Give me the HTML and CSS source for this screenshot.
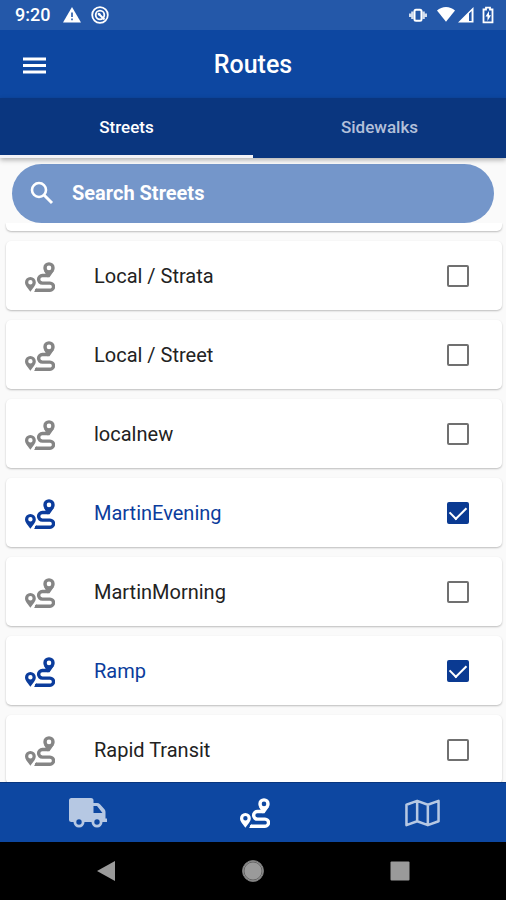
FILE: index.html
```html
<!DOCTYPE html>
<html lang="en">
<head>
<meta charset="utf-8">
<meta name="viewport" content="width=device-width, initial-scale=1">
<title>Routes</title>
<link rel="stylesheet" href="styles.css">
</head>
<body>
<svg class="defs" aria-hidden="true">
  <symbol id="route" viewBox="0 0 30 30">
    <g fill="none" stroke="currentColor" stroke-width="3.400" stroke-linecap="round" stroke-linejoin="round">
      <circle cx="24" cy="5.900" r="4"/>
      <path d="M23 13.500H17.400a3.800 3.800 0 0 0 0 7.600H25a3.550 3.550 0 0 1 0 7.100H11.500"/>
    </g>
    <path fill="currentColor" d="M9 29.900 12 25.900V29.900ZM18.800 8.500 24 10.500 29.200 8.500 24.500 15.200H22.500Z"/>
    <path fill="currentColor" fill-rule="evenodd" d="M5.400 14.900A5.400 5.400 0 0 0 0 20.300C0 23.800 3 26 5.400 29.800 7.800 26 10.800 23.800 10.800 20.300A5.400 5.400 0 0 0 5.400 14.900ZM5.400 18.100a2.200 2.200 0 1 1 0 4.400 2.200 2.200 0 0 1 0-4.400Z"/>
  </symbol>
</svg>
<div class="screen">
  <div class="status">
    <span class="clock">9:20</span>
    <svg class="glyph" viewBox="0 0 18 18"><path fill="#fff" d="M9 1 18 16.500H0Z"/><path stroke="#2458a9" stroke-width="1.600" d="M9 6.500v4.500M9 12.500v1.800"/></svg>
    <svg class="glyph" viewBox="0 0 18 18" fill="none" stroke="#fff"><circle cx="9" cy="9" r="7.800" stroke-width="1.800"/><circle cx="9" cy="9" r="4.300" stroke-width="1.800"/><path d="M7 7.200 13.500 13.500" stroke-width="2"/><circle cx="8.300" cy="8.300" r="1.300" fill="#fff" stroke="none"/></svg>
    <span class="spacer"></span>
    <svg class="glyph" viewBox="0 0 18 18"><rect x="5.500" y="3.800" width="7" height="11" rx="1.500" fill="none" stroke="#fff" stroke-width="2"/><path stroke="#fff" stroke-width="2.400" stroke-opacity=".8" d="M3.400 5.500v7.500M1.200 7.500v3.500M14.600 5.500v7.500M16.800 7.500v3.500"/></svg>
    <span class="signals">
      <svg class="glyph" viewBox="0 0 18 18"><path fill="#fff" d="M0 4.500C5-.3 13-.3 18 4.500L9 15.800Z"/></svg>
      <svg class="glyph" viewBox="0 0 18 18"><path fill="#fff" fill-rule="evenodd" d="M1 16.500 16.500 1V16.500ZM12 7.500V15h2.600V5.100Z"/></svg>
    </span>
    <svg class="battery" viewBox="0 0 12 18"><path fill="none" stroke="#fff" stroke-width="1.800" d="M1.500 3.500h2.500V1.600h4v1.900h2.500v12.800h-9Z"/><path fill="#fff" d="M7 5 3.500 10.500h2V15L9 9.200H7Z"/></svg>
  </div>
  <header class="appbar">
    <button class="menu" aria-label="Menu"><svg viewBox="0 0 24 18"><path stroke="#fff" stroke-width="3" d="M0 3h23M0 9.500h23M0 16h23"/></svg></button>
    <h1>Routes</h1>
  </header>
  <nav class="tabs">
    <button class="tab active">Streets</button>
    <button class="tab">Sidewalks</button>
  </nav>
  <main>
    <label class="search">
      <svg viewBox="0 0 24 24" fill="none" stroke="#fff"><circle cx="9" cy="9" r="7" stroke-width="2.600"/><path d="M14 14 22 22" stroke-width="3"/></svg>
      <input type="text" placeholder="Search Streets" aria-label="Search Streets">
    </label>
    <ul class="list">
      <li class="card edge"></li>
      <li class="card"><label><svg class="route"><use href="#route"/></svg><span>Local / Strata</span><input type="checkbox"></label></li>
      <li class="card"><label><svg class="route"><use href="#route"/></svg><span>Local / Street</span><input type="checkbox"></label></li>
      <li class="card"><label><svg class="route"><use href="#route"/></svg><span>localnew</span><input type="checkbox"></label></li>
      <li class="card on"><label><svg class="route"><use href="#route"/></svg><span>MartinEvening</span><input type="checkbox" checked></label></li>
      <li class="card"><label><svg class="route"><use href="#route"/></svg><span>MartinMorning</span><input type="checkbox"></label></li>
      <li class="card on"><label><svg class="route"><use href="#route"/></svg><span>Ramp</span><input type="checkbox" checked></label></li>
      <li class="card"><label><svg class="route"><use href="#route"/></svg><span>Rapid Transit</span><input type="checkbox"></label></li>
    </ul>
  </main>
  <nav class="bottom">
    <button aria-label="Trucks"><svg class="truck" viewBox="0 0 38 32"><path fill="currentColor" fill-rule="evenodd" d="M2.500 1H22a2.500 2.500 0 0 1 2.500 2.500V6H28a4 4 0 0 1 3 1.300l4.500 5a4 4 0 0 1 1 2.700v6.500H38V25H33.500a5.500 5.500 0 0 1-11 0H15.500a5.500 5.500 0 0 1-11 0H2.500A2.500 2.500 0 0 1 0 22.500v-19A2.500 2.500 0 0 1 2.500 1ZM24.500 9v7H33.500L28 9ZM10 22.300a2.700 2.700 0 1 0 0 5.400 2.700 2.700 0 0 0 0-5.400ZM28 22.300a2.700 2.700 0 1 0 0 5.400 2.700 2.700 0 0 0 0-5.400Z"/></svg></button>
    <button class="current" aria-label="Routes"><svg class="route"><use href="#route"/></svg></button>
    <button aria-label="Map"><svg class="map" viewBox="0 0 36 28"><path fill="none" stroke="currentColor" stroke-width="2.600" stroke-linejoin="round" d="M1.500 5.500 12.500 1.500 23.500 5.500 34.500 1.500V22.500L23.500 26.500 12.500 22.500 1.500 26.500ZM12.500 1.500v21M23.500 5.500v21"/></svg></button>
  </nav>
  <div class="system">
    <button aria-label="Back"><svg viewBox="0 0 24 24"><path fill="#9a9a9a" d="M3 12 21 2V22Z"/></svg></button>
    <button aria-label="Home"><svg viewBox="0 0 24 24"><circle cx="12" cy="12" r="10.500" fill="#9a9a9a" stroke="#777"/><circle cx="12" cy="12" r="9" fill="none" stroke="#555" stroke-width=".8"/></svg></button>
    <button aria-label="Recent apps"><svg viewBox="0 0 24 24"><rect x="2.500" y="2.500" width="19" height="19" rx="1" fill="#9a9a9a"/></svg></button>
  </div>
</div>
</body>
</html>
```
FILE: styles.css
```css
* { box-sizing: border-box; }
body { margin: 0; font-family: Roboto, "Liberation Sans", sans-serif; background: #fafafa; }
button { border: 0; padding: 0; background: none; font: inherit; color: inherit; }
svg { display: block; flex: none; }
.defs { position: absolute; width: 0; height: 0; }
.screen { display: flex; flex-direction: column; height: 100vh; overflow: hidden; }

.status { display: flex; align-items: center; gap: 10px; height: 30px; flex: none; padding: 0 12px 0 15px; background: #2458a9; color: #fff; }
.clock { font-size: 18px; font-weight: 500; line-height: 30px; margin-right: 3px; }
.spacer { flex: 1; }
.glyph { width: 18px; height: 18px; }
.signals { display: flex; gap: 2px; }
.battery { width: 12px; height: 18px; margin-left: -3px; }

.appbar { display: grid; grid-template-columns: 70px 1fr 70px; align-items: center; height: 68px; flex: none; padding-top: 2px; background: #0d47a1; color: #fff; }
.menu { height: 48px; padding-left: 23px; }
.menu svg { width: 24px; height: 18px; }
h1 { margin: 0; font-size: 25px; line-height: 30px; font-weight: 500; text-align: center; }

.tabs { display: flex; height: 60px; flex: none; background: #0a367f; box-shadow: 0 2px 5px rgba(0, 0, 0, .3); z-index: 1; }
.tab { flex: 1; font-size: 17px; font-weight: 500; color: #b3c0da; border-bottom: 3px solid transparent; }
.tab.active { color: #fff; border-color: #f3f3f8; }

main { flex: 1; min-height: 0; display: flex; flex-direction: column; background: #fafafa; }
.search { display: flex; align-items: center; gap: 18px; height: 59px; flex: none; margin: 6px 12px 0; padding: 0 18px 2px; border-radius: 30px; background: #7496ca; }
.search svg { width: 24px; height: 24px; }
.search input { flex: 1; min-width: 0; padding: 0; border: 0; outline: 0; background: none; font: 700 20px/24px Roboto, sans-serif; color: #fff; }
.search input::placeholder { color: #fff; opacity: 1; }

.list { flex: 1; min-height: 0; overflow: hidden; list-style: none; margin: 0; padding: 0 4px 0 6px; display: flex; flex-direction: column; gap: 10px; }
.card { flex: none; background: #fff; border-radius: 5px; box-shadow: 0 1px 2px rgba(0, 0, 0, .25); }
.card.edge { height: 8px; border-radius: 0 0 5px 5px; }
.card label { display: flex; align-items: center; height: 69px; padding: 0 33px 0 19px; }
.card span { flex: 1; margin-left: 39px; font-size: 20px; line-height: 28px; color: #222; }
.route { width: 30px; height: 30px; color: #858585; }
.card .route { margin-top: 3px; }
.card input { appearance: none; display: grid; place-items: center; width: 22px; height: 22px; margin: 0; border: 2px solid #707070; border-radius: 2px; }
.card input:checked { border-color: #0a3a92; background: #0a3a92; }
.card input:checked::after { content: ""; width: 14px; height: 8px; margin-top: -4px; border: solid #fff; border-width: 0 0 2px 2px; transform: rotate(-45deg); }
.card.on span, .card.on .route { color: #0b3c9c; }

.bottom { display: flex; height: 60px; flex: none; padding-left: 4px; background: #0d47a1; border-top: 1px solid #08367f; color: #b6c8e3; z-index: 1; }
.bottom button, .system button { flex: 1; display: grid; place-items: center; }
.bottom .route { color: #fff; }
.truck { width: 38px; height: 32px; }
.map { width: 35px; height: 28px; }

.system { display: flex; height: 58px; flex: none; padding: 0 33px; background: #000; }
.system svg { width: 24px; height: 24px; }
```
